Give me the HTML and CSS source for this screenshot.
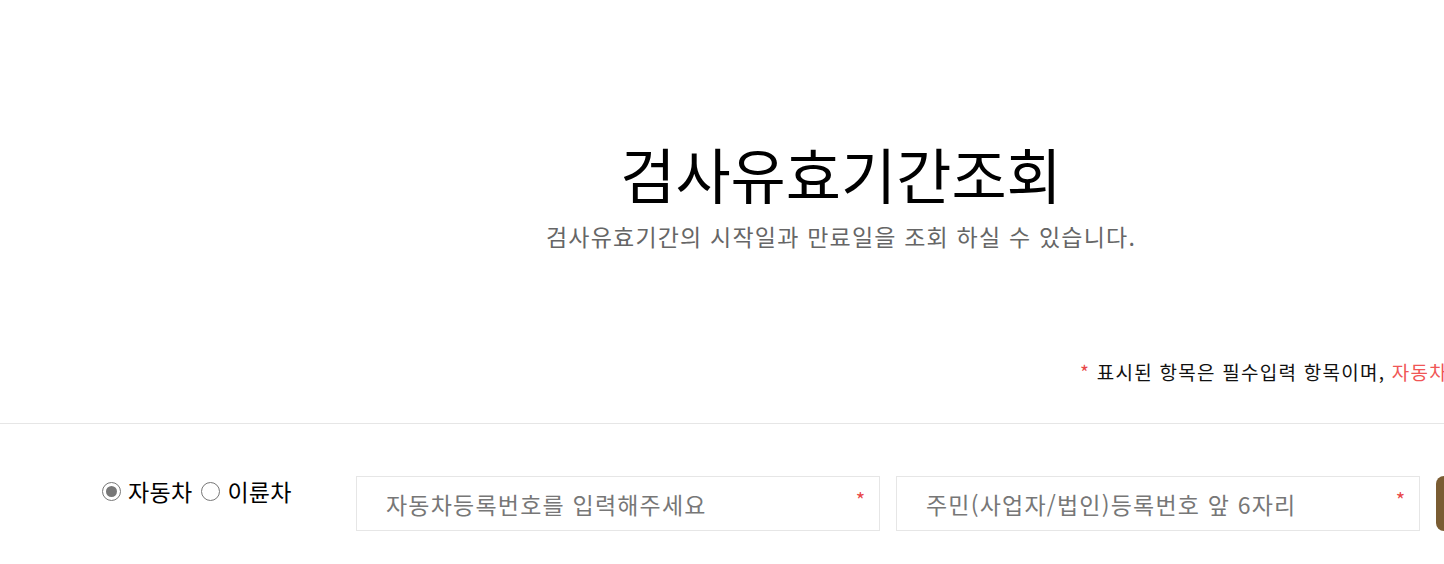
FILE: index.html
```html
<!DOCTYPE html>
<html lang="ko">
<head>
<meta charset="utf-8">
<title>검사유효기간조회</title>
<link rel="stylesheet" href="styles.css">
</head>
<body>
<div class="page">
  <header class="head">
    <h1 class="title">검사유효기간조회</h1>
    <p class="subtitle">검사유효기간의 시작일과 만료일을 조회 하실 수 있습니다.</p>
  </header>
  <p class="note"><span class="req">*</span> 표시된 항목은 필수입력 항목이며, <span class="warn">자동차등록번호와 주민등록번호 앞 6자리를 정확히 입력해 주세요.</span></p>
  <div class="divider"></div>
  <form class="search">
    <div class="kinds">
      <label class="kind"><span class="radio checked"></span>자동차</label>
      <label class="kind"><span class="radio"></span>이륜차</label>
    </div>
    <div class="field">
      <span class="ph">자동차등록번호를 입력해주세요</span>
      <span class="star">*</span>
    </div>
    <div class="field">
      <span class="ph">주민(사업자/법인)등록번호 앞 6자리</span>
      <span class="star">*</span>
    </div>
    <button type="button" class="btn">조회하기</button>
  </form>
</div>
</body>
</html>
```

FILE: styles.css
```css
html, body {
  margin: 0;
  padding: 0;
  background: #fff;
  overflow: hidden;
}
body {
  font-family: "Noto Sans CJK KR", "Noto Sans", sans-serif;
  color: #111;
}
.page {
  width: 1682px;
}
.head {
  text-align: center;
  padding-top: 133px;
}
.title {
  margin: 0;
  font-size: 60px;
  font-weight: 400;
  line-height: 80px;
  color: #000;
}
.subtitle {
  margin: 8px 0 0;
  font-size: 23px;
  letter-spacing: 1.2px;
  line-height: 30px;
  color: #666;
}
.note {
  margin: 108px 0 0;
  padding-left: 1080px;
  font-size: 19px;
  letter-spacing: 1.25px;
  line-height: 26px;
  white-space: nowrap;
  color: #111;
}
.req { color: #e84848; }
.warn { color: #f05656; }
.divider {
  margin-top: 38px;
  height: 1px;
  background: #e6e6e6;
}
.search {
  display: flex;
  align-items: flex-start;
  padding: 52px 0 0 102px;
}
.kinds {
  display: flex;
  gap: 9px;
  width: 254px;
  padding-top: 1px;
}
.kind {
  display: flex;
  align-items: center;
  gap: 7px;
  font-size: 23px;
  letter-spacing: 0.3px;
  line-height: 28px;
  color: #000;
}
.radio {
  width: 17px;
  height: 17px;
  border: 1.5px solid #777;
  border-radius: 50%;
  display: flex;
  align-items: center;
  justify-content: center;
  box-sizing: content-box;
}
.radio.checked::after {
  content: "";
  width: 11px;
  height: 11px;
  border-radius: 50%;
  background: #777;
}
.field {
  width: 524px;
  height: 55px;
  box-sizing: border-box;
  border: 1px solid #e6e6e6;
  margin-right: 16px;
  display: flex;
  align-items: center;
  justify-content: space-between;
  padding: 0 14px 0 29px;
}
.ph {
  font-size: 23px;
  letter-spacing: 1.2px;
  color: #777;
}
.star {
  color: #e84848;
  font-size: 20px;
  align-self: flex-start;
  margin-top: 8px;
}
.btn {
  width: 160px;
  height: 55px;
  border: 0;
  border-radius: 8px;
  background: #7a5c32;
  color: #fff;
  font-family: inherit;
  font-size: 20px;
}
```
